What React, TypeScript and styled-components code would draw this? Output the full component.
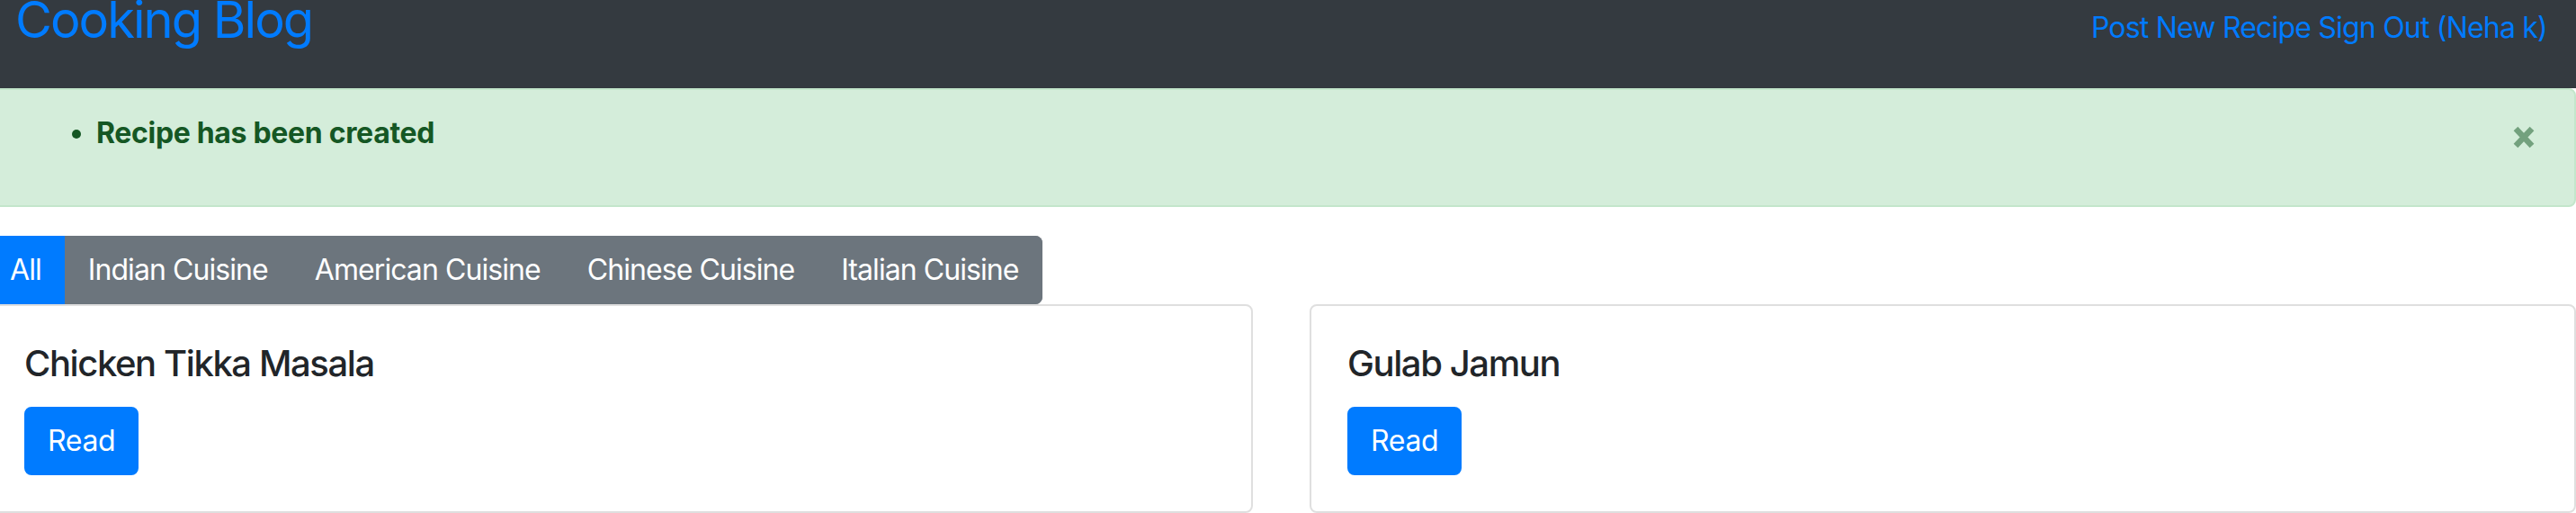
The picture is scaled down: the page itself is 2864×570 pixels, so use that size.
import React from "react";
import styled, { createGlobalStyle } from "styled-components";

const GlobalStyle = createGlobalStyle`
  body {
    margin: 0;
    overflow: hidden;
    background: #fff;
    color: #212529;
    font-family: Inter, "Noto Sans", "Liberation Sans", sans-serif;
    letter-spacing: -0.02em;
  }
`;

const categories = [
  "All",
  "Indian Cuisine",
  "American Cuisine",
  "Chinese Cuisine",
  "Italian Cuisine",
];

const recipes = ["Chicken Tikka Masala", "Gulab Jamun"];

const App: React.FC = () => {
  return (
    <>
      <GlobalStyle />
      <Page>
        <Navbar>
          <Brand href="#">Cooking Blog</Brand>
          <NavLinks>
            <NavLink href="#">Post New Recipe</NavLink>{" "}
            <NavLink href="#">Sign Out (Neha k)</NavLink>
          </NavLinks>
        </Navbar>

        <Alert>
          <Messages>
            <li>Recipe has been created</li>
          </Messages>
          <CloseButton aria-label="Close">
            <svg width="24" height="25" viewBox="0 0 24 25">
              <path
                d="M3 3 L21 22 M21 3 L3 22"
                stroke="currentColor"
                strokeWidth="6.5"
                fill="none"
              />
            </svg>
          </CloseButton>
        </Alert>

        <TabGroup>
          {categories.map((c, i) => (
            <TabButton key={c} $active={i === 0}>
              {c}
            </TabButton>
          ))}
        </TabGroup>

        <CardGrid>
          {recipes.map((r) => (
            <Card key={r}>
              <CardTitle>{r}</CardTitle>
              <ReadButton href="#">Read</ReadButton>
            </Card>
          ))}
        </CardGrid>
      </Page>
    </>
  );
};

const Page = styled.div`
  margin-left: -15px;
  width: calc(100% + 15px);
`;

const Navbar = styled.nav`
  height: 98px;
  box-sizing: border-box;
  background: #343a40;
  display: flex;
  justify-content: space-between;
  align-items: baseline;
  padding: 0 32px;
`;

const Brand = styled.a`
  font-size: 56px;
  line-height: 0.8;
  font-weight: 400;
  letter-spacing: -0.035em;
  color: #007bff;
  text-decoration: none;
`;

const NavLinks = styled.div`
  font-size: 32px;
  line-height: 48px;
  letter-spacing: -0.025em;
`;

const NavLink = styled.a`
  color: #007bff;
  text-decoration: none;
`;

const Alert = styled.div`
  display: flex;
  align-items: flex-start;
  background: #d4edda;
  border: 2px solid #c3e6cb;
  border-radius: 8px;
  color: #155724;
  padding: 24px 40px;
  margin-bottom: 32px;
`;

const Messages = styled.ul`
  flex: 1;
  margin: 0 0 32px;
  padding-left: 80px;
  font-size: 32px;
  line-height: 48px;
  font-weight: 700;
  letter-spacing: -0.01em;
`;

const CloseButton = styled.button`
  display: flex;
  background: none;
  border: none;
  padding: 0;
  margin: 16px 4px 0 0;
  color: #155724;
  opacity: 0.5;
  cursor: pointer;
`;

const TabGroup = styled.div`
  display: inline-flex;
  border-radius: 8px;
  overflow: hidden;
  vertical-align: top;
`;

const TabButton = styled.button<{ $active?: boolean }>`
  font-family: inherit;
  letter-spacing: -0.029em;
  font-size: 32px;
  line-height: 48px;
  padding: 12px 24px;
  color: #fff;
  background: ${(p) => (p.$active ? "#007bff" : "#6c757d")};
  border: 2px solid ${(p) => (p.$active ? "#007bff" : "#6c757d")};
  margin: 0;
`;

const CardGrid = styled.div`
  display: grid;
  grid-template-columns: 1fr 1fr;
  column-gap: 63px;
`;

const Card = styled.div`
  border: 2px solid rgba(0, 0, 0, 0.125);
  border-radius: 8px;
  padding: 40px;
`;

const CardTitle = styled.h5`
  font-size: 40px;
  line-height: 1.2;
  font-weight: 500;
  letter-spacing: -0.035em;
  margin: 0 0 24px;
  color: #212529;
`;

const ReadButton = styled.a`
  display: inline-block;
  font-size: 32px;
  line-height: 48px;
  padding: 12px 24px;
  color: #fff;
  background: #007bff;
  border: 2px solid #007bff;
  border-radius: 8px;
  text-decoration: none;
`;

export default App;
